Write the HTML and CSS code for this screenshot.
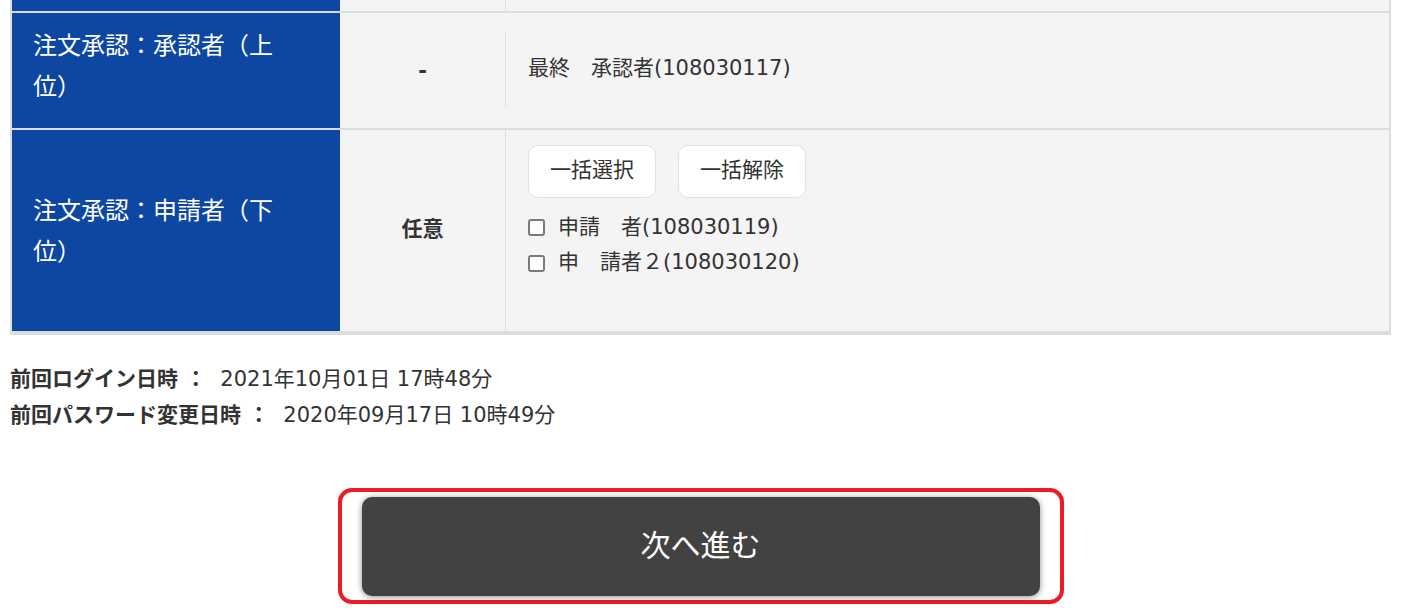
FILE: index.html
```html
<!DOCTYPE html>
<html lang="ja">
<head>
<meta charset="utf-8">
<title>承認設定</title>
<link rel="stylesheet" href="styles.css">
</head>
<body>
<div class="page">
  <div class="tbl">
    <div class="row row-strip">
      <div class="th"></div>
      <div class="req"></div>
      <div class="val"><div class="val-inner"></div></div>
    </div>
    <div class="row">
      <div class="th">注文承認：承認者（上位）</div>
      <div class="req req-dash">-</div>
      <div class="val"><div class="val-inner val-single">最終　承認者(108030117)</div></div>
    </div>
    <div class="row">
      <div class="th th-tall">注文承認：申請者（下位）</div>
      <div class="req">任意</div>
      <div class="val">
        <div class="val-inner val-list">
          <div class="bulk">
            <button class="bulk-btn" type="button">一括選択</button>
            <button class="bulk-btn" type="button">一括解除</button>
          </div>
          <ul class="checks">
            <li><label class="check"><input class="check-box" type="checkbox"><span>申請　者(108030119)</span></label></li>
            <li><label class="check"><input class="check-box" type="checkbox"><span>申　請者２(108030120)</span></label></li>
          </ul>
        </div>
      </div>
    </div>
  </div>

  <div class="meta">
    <p class="meta-line"><span class="meta-label">前回ログイン日時 ：</span><span class="meta-value">2021年10月01日 17時48分</span></p>
    <p class="meta-line"><span class="meta-label">前回パスワード変更日時 ：</span><span class="meta-value">2020年09月17日 10時49分</span></p>
  </div>

  <div class="actions">
    <div class="highlight">
      <button class="next" type="button">次へ進む</button>
    </div>
  </div>
</div>
</body>
</html>
```

FILE: styles.css
```css
* {
  box-sizing: border-box;
}

html, body {
  margin: 0;
  padding: 0;
  background: #ffffff;
}

body {
  font-family: "DejaVu Sans", "Noto Sans CJK JP", sans-serif;
  font-size: 21px;
  line-height: 1.7;
  color: #333333;
}

.page {
  width: 1381px;
  margin-left: 10px;
}

.tbl {
  border: 2px solid #dddddd;
  border-top: none;
}

.row {
  display: grid;
  grid-template-columns: 328px 165px 1fr;
  border-bottom: 2px solid #dddddd;
  background: #f4f4f4;
}

.row-strip {
  height: 13px;
}

.th {
  background: #0d47a1;
  color: #ffffff;
  font-size: 24px;
  display: flex;
  align-items: center;
  padding: 11px 50px 22px 21px;
  font-family: "Noto Sans CJK JP", sans-serif;
}

.th-tall {
  padding-top: 16px;
  padding-bottom: 16px;
}

.row-strip .th {
  padding: 0;
}

.req {
  display: flex;
  align-items: center;
  justify-content: center;
  font-weight: bold;
}

.req-dash {
  padding-top: 3px;
}

.val {
  display: flex;
  align-items: center;
}

.val-inner {
  align-self: stretch;
  flex: 1;
  border-left: 1px solid #dddddd;
  padding-left: 22px;
}

.val-single {
  align-self: center;
  padding-top: 18px;
  padding-bottom: 20px;
}

.val-list {
  padding-top: 15px;
  padding-bottom: 50px;
}

.bulk {
  display: flex;
  gap: 22px;
}

.bulk-btn {
  font: inherit;
  color: #333333;
  width: 128px;
  height: 53px;
  padding: 0;
  background: #ffffff;
  border: 1px solid #e2e2e2;
  border-radius: 10px;
}

.checks {
  list-style: none;
  margin: 12px 0 0;
  padding: 0;
}

.check {
  display: flex;
  align-items: center;
  gap: 13px;
}

.check-box {
  appearance: none;
  -webkit-appearance: none;
  flex: none;
  width: 17px;
  height: 17px;
  margin: 0;
  border: 2px solid #7a7a7a;
  border-radius: 3px;
  background: #ffffff;
}

.meta {
  margin-top: 27px;
}

.meta-line {
  margin: 0;
}

.meta-label {
  font-weight: bold;
}

.meta-value {
  margin-left: 14px;
}

.actions {
  margin-top: 55px;
  display: flex;
  justify-content: center;
}

.highlight {
  border: 4px solid #ed1c24;
  border-radius: 14px;
  padding: 5px 20px 4px;
}

.next {
  display: flex;
  align-items: center;
  justify-content: center;
  width: 678px;
  height: 99px;
  padding: 0 0 8px;
  background: #424242;
  color: #ffffff;
  font-family: "Noto Sans CJK JP", sans-serif;
  font-size: 30px;
  border: none;
  border-radius: 10px;
  box-shadow: 0 1px 6px rgba(0, 0, 0, 0.45);
}
```
